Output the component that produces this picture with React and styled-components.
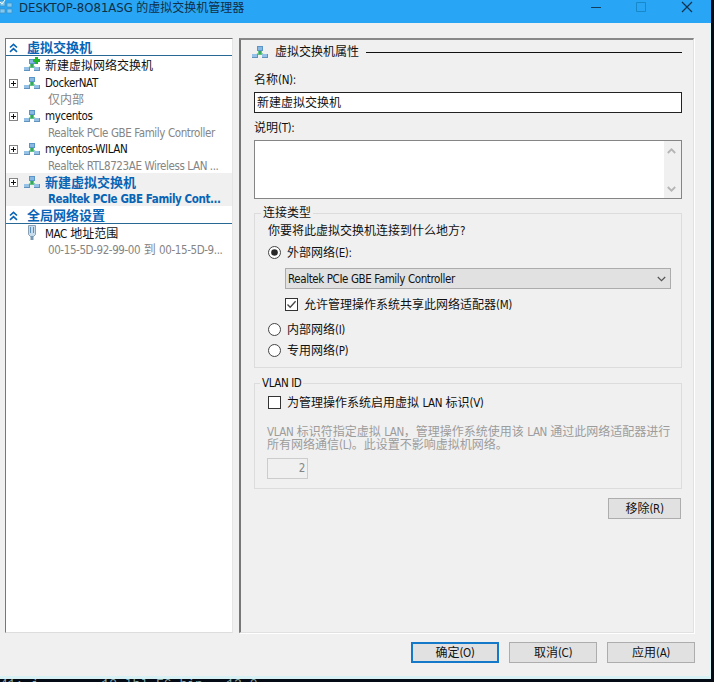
import styled, { createGlobalStyle } from "styled-components";

const adapter = "Realtek PCIe GBE Family Controller";

const switches = [
  { name: "DockerNAT", detail: "仅内部" },
  { name: "mycentos", detail: adapter },
  { name: "mycentos-WILAN", detail: "Realtek RTL8723AE Wireless LAN ..." },
  { name: "新建虚拟交换机", detail: "Realtek PCIe GBE Family Cont...", selected: true },
];

// latin runs are set a little smaller than the chinese text
const Text = ({ children }) =>
  children
    .split(/([\x21-\x7e](?:[\x20-\x7e]*[\x21-\x7e])?)/)
    .map((part, i) => (i % 2 ? <Latin key={i}>{part}</Latin> : part));

const SwitchIcon = ({ add }) => (
  <svg width="18" height="16" viewBox="0 0 18 16">
    <path d="M7 6h4v3l3 2H4l3-2z" fill="#63c581" />
    <path d="M8 6h2v4H8z" fill="#36a95e" />
    <rect x="6" y="2" width="6" height="5" fill="#5b94c6" />
    <rect x="7" y="3" width="4" height="3" fill="#87b9e2" />
    <rect x="1" y="10" width="6" height="4" fill="#5f92bd" />
    <rect x="1" y="10" width="5" height="3" fill="#94c1e5" />
    <rect x="11" y="10" width="6" height="4" fill="#5f92bd" />
    <rect x="11" y="10" width="5" height="3" fill="#94c1e5" />
    {add && <path d="M12 0h3v2h2v3h-2v2h-3V5h-2V2h2z" fill="#20b52b" />}
  </svg>
);

const MacIcon = () => (
  <svg width="18" height="18" viewBox="0 0 18 18">
    <path d="M5.5 1.5h7v9l-2 2h-3l-2-2z" fill="#c6dced" stroke="#8ba0b2" />
    <path d="M7.5 3v6m3-6v6" stroke="#5b90ba" />
    <path d="M7.5 12h3v4h-3z" fill="#7898b2" />
  </svg>
);

const Plus = () => (
  <svg width="9" height="9" viewBox="0 0 9 9" shapeRendering="crispEdges">
    <path d="M.5.5h8v8h-8z" fill="#fff" stroke="#848484" />
    <path d="M2 4.5h5M4.5 2v5" stroke="#111" />
  </svg>
);

const Chevrons = () => (
  <svg width="9" height="10" viewBox="0 0 9 10">
    <path d="M1 4.5l3.5-3.2L8 4.5M1 8.8l3.5-3.2L8 8.8" fill="none" stroke="#0864b5" strokeWidth="1.6" />
  </svg>
);

const Arrow = ({ up, color = "#b5b5b5", weight = 1.8 }) => (
  <svg width="9" height="6" viewBox="0 0 9 6">
    <path d={up ? "M.8 5l3.7-3.7L8.2 5" : "M.8 1l3.7 3.7L8.2 1"} fill="none" stroke={color} strokeWidth={weight} />
  </svg>
);

const Choice = ({ box, checked, children, ...rest }) => (
  <ChoiceRow {...rest}>
    <svg width="13" height="13" viewBox="0 0 13 13">
      {box ? (
        <rect x=".5" y=".5" width="12" height="12" fill="#fff" stroke="#333" />
      ) : (
        <circle cx="6.5" cy="6.5" r="6" fill="#fff" stroke="#444" />
      )}
      {checked && box && <path d="M2.5 6.5l2.7 2.8 5.4-6" fill="none" stroke="#444" strokeWidth="1.3" />}
      {checked && !box && <circle cx="6.5" cy="6.5" r="3.3" fill="#292929" />}
    </svg>
    <span>
      <Text>{children}</Text>
    </span>
  </ChoiceRow>
);

const App = () => (
  <Desktop>
    <GlobalStyle />
    <Window>
      <TitleBar>
        <svg width="14" height="16" viewBox="0 0 14 16">
          <path d="M0 1h5v5H0zM7 3h5v4H7zM0 9h5v4H0zM7 9h5v4H7z" fill="#83c8ef" stroke="#3b91c4" strokeWidth=".7" />
          <path d="M0 2l2 2 3-4" fill="none" stroke="#eefaff" />
        </svg>
        <Title>
          <HostName>DESKTOP-8O81ASG</HostName> 的虚拟交换机管理器
        </Title>
        <svg width="106" height="14" viewBox="0 0 106 14">
          <path d="M1 7.5h10" stroke="#123d5b" />
          <path d="M46.5 2.5h9v9h-9z" fill="none" stroke="#1788c9" />
          <path d="M92 2l10 10m0-10L92 12" stroke="#10324c" strokeWidth="1.2" />
        </svg>
      </TitleBar>
      <Main>
        <Sidebar>
          <SectionTitle>
            <Chevrons />
            <span>虚拟交换机</span>
          </SectionTitle>
          <Item $height={18}>
            <i />
            <SwitchIcon add />
            <ItemName $drop>新建虚拟网络交换机</ItemName>
          </Item>
          {switches.map(({ name, detail, selected }) => (
            <Item key={name} $selected={selected}>
              <Plus />
              <SwitchIcon />
              <ItemName $drop={selected}>
                <Text>{name}</Text>
              </ItemName>
              <Detail>
                <Text>{detail}</Text>
              </Detail>
            </Item>
          ))}
          <SectionTitle $height={18}>
            <Chevrons />
            <span>全局网络设置</span>
          </SectionTitle>
          <Item>
            <i />
            <MacIcon />
            <ItemName $drop>
              <Text>MAC 地址范围</Text>
            </ItemName>
            <Detail>
              <Text>00-15-5D-92-99-00 到 00-15-5D-9...</Text>
            </Detail>
          </Item>
        </Sidebar>
        <Properties>
          <Heading>
            <SwitchIcon />
            <span>虚拟交换机属性</span>
          </Heading>
          <Label>
            <Text>名称(N):</Text>
          </Label>
          <NameField>新建虚拟交换机</NameField>
          <Label $height={27}>
            <Text>说明(T):</Text>
          </Label>
          <Notes>
            <ScrollBar>
              <Arrow up />
              <Arrow />
            </ScrollBar>
          </Notes>
          <Connection>
            <Legend>连接类型</Legend>
            <Question>
              <Text>你要将此虚拟交换机连接到什么地方?</Text>
            </Question>
            <Choice checked>外部网络(E):</Choice>
            <Select>
              <span>
                <Text>{adapter}</Text>
              </span>
              <Arrow color="#555" weight={1.2} />
            </Select>
            <Choice box checked $nested>
              允许管理操作系统共享此网络适配器(M)
            </Choice>
            <Choice>内部网络(I)</Choice>
            <Choice>专用网络(P)</Choice>
          </Connection>
          <Vlan>
            <Legend>
              <Text>VLAN ID</Text>
            </Legend>
            <Choice box>为管理操作系统启用虚拟 LAN 标识(V)</Choice>
            <Hint>
              <Text>VLAN 标识符指定虚拟 LAN，管理操作系统使用该 LAN 通过此网络适配器进行</Text>
              <br />
              <Text>所有网络通信(L)。此设置不影响虚拟机网络。</Text>
            </Hint>
            <VlanInput>
              <Text>2</Text>
            </VlanInput>
          </Vlan>
          <Remove>
            <Text>移除(R)</Text>
          </Remove>
        </Properties>
      </Main>
      <Footer>
        <Button $primary>
          <Text>确定(O)</Text>
        </Button>
        <Button>
          <Text>取消(C)</Text>
        </Button>
        <Button>
          <Text>应用(A)</Text>
        </Button>
      </Footer>
    </Window>
    <Terminal>41: i        10 lbl F6 bin   12 0</Terminal>
  </Desktop>
);

export default App;

const GlobalStyle = createGlobalStyle`
  * {
    box-sizing: border-box;
  }

  body {
    margin: 0;
    overflow: hidden;
  }

  svg {
    display: block;
    flex-shrink: 0;
  }
`;

const Desktop = styled.div`
  width: 714px;
  height: 682px;
  overflow: hidden;
  background: #050b14;
  color: #111;
  font: 12px/16px "DejaVu Sans Condensed", "Noto Sans CJK SC", sans-serif;
  white-space: nowrap;
`;

const Latin = styled.span`
  font-size: 11.5px;
  letter-spacing: -0.4px;
`;

const Window = styled.div`
  width: 711px;
  height: 679px;
  border-right: 2px solid #d8fafc;
  border-bottom: 3px solid #d8f1f4;
  background: #f0f0f0;
`;

const TitleBar = styled.header`
  display: flex;
  align-items: flex-start;
  height: 23px;
  width: 711px;
  padding-right: 15px;
  background: #29a5f5;
`;

const Title = styled.div`
  flex: 1;
  padding-left: 5px;
  color: #102f45;
`;

const HostName = styled.span`
  font-size: 13px;
`;

const Main = styled.main`
  display: flex;
  gap: 6px;
  padding: 15px 0 0 5px;
`;

const Sidebar = styled.aside`
  width: 228px;
  height: 595px;
  border: 1px solid #777;
  border-right-color: #e5e5e5;
  border-bottom-color: #ddd;
  background: #fff;
`;

const SectionTitle = styled.div`
  display: grid;
  grid-template-columns: 18px 1fr;
  align-items: center;
  height: ${({ $height = 17 }) => $height}px;
  padding: 2px 0 0 3px;
  border-bottom: 1px solid #286894;
  color: #0864b5;
  font-size: 13px;
  line-height: 14px;
  font-weight: 700;
`;

const Item = styled.div`
  display: grid;
  grid-template-columns: 14px 21px 1fr;
  grid-template-rows: 18px 15px;
  align-items: center;
  height: ${({ $height = 33 }) => $height}px;
  padding-left: 3px;
  overflow: hidden;
  background: ${({ $selected }) => ($selected ? "#f0f0f0" : "transparent")};
  color: ${({ $selected }) => ($selected ? "#0864b5" : "#111")};
  font-weight: ${({ $selected }) => ($selected ? 700 : 400)};
  font-size: ${({ $selected }) => ($selected ? 13 : 12)}px;

  > span:last-child {
    color: ${({ $selected }) => $selected && "#0864b5"};
  }
`;

const ItemName = styled.span`
  padding: ${({ $drop }) => ($drop ? 2 : 0)}px 0 0 1px;
`;

const Detail = styled.span`
  grid-column: 3;
  padding-left: 4px;
  color: #858585;
`;

const Properties = styled.section`
  width: 455px;
  height: 595px;
  padding: 3px 11px 0 13px;
  border: 1px solid #e1e1e1;
  border-top: 2px solid #888;
  border-left: 2px solid #777;
  box-shadow: 1px 1px #fff;
`;

const Heading = styled.div`
  display: flex;
  align-items: center;
  gap: 6px;
  height: 18px;
  margin: 0 0 2px -3px;

  &::after {
    flex: 1;
    margin-left: 1px;
    border-top: 1px solid #111;
    content: "";
  }
`;

const Label = styled.div`
  height: ${({ $height = 29 }) => $height}px;
  padding-top: ${({ $height = 29 }) => $height - 20}px;
`;

const NameField = styled.div`
  height: 21px;
  padding: 2px;
  border: 1px solid #222;
  background: #fff;
`;

const Notes = styled.div`
  display: flex;
  justify-content: flex-end;
  height: 59px;
  border: 1px solid #858585;
  background: #fff;
`;

const ScrollBar = styled.div`
  display: flex;
  flex-direction: column;
  align-items: center;
  justify-content: space-between;
  width: 17px;
  padding: 7px 2px 6px 0;
  background: #f0f0f0;
`;

const Group = styled.div`
  border: 1px solid #dcdcdc;
`;

const Connection = styled(Group)`
  height: 155px;
  margin-top: 14px;
  padding: 0 10px 0 13px;
`;

const Vlan = styled(Group)`
  height: 106px;
  margin-top: 15px;
  padding: 0 12px;

  > div:nth-child(2) {
    margin: 1px 0 0 1px;
  }
`;

const Legend = styled.div`
  width: fit-content;
  height: 16px;
  margin: -9px 0 0 -7px;
  padding: 0 2px;
  background: #f0f0f0;
`;

const Question = styled.div`
  height: 21px;
  padding-top: 2px;
`;

const ChoiceRow = styled.div`
  display: flex;
  align-items: center;
  gap: 6px;
  height: 21px;
  margin: ${({ $nested }) => ($nested ? "5px 0 4px 17px" : "0")};
`;

const Select = styled.div`
  display: flex;
  align-items: center;
  justify-content: space-between;
  height: 21px;
  margin: 5px 0 0 17px;
  padding: 0 4px 0 2px;
  border: 1px solid #acacac;
  background: #e1e1e1;
`;

const Hint = styled.div`
  height: 45px;
  padding-top: 13px;
  color: #9c9c9c;
  line-height: 13px;
`;

const VlanInput = styled.div`
  width: 41px;
  height: 21px;
  padding: 1px 2px 0;
  border: 1px solid #ccc;
  color: #858585;
  text-align: right;
`;

const Button = styled.button`
  width: 88px;
  height: 21px;
  padding: 2px 0 0;
  border: ${({ $primary }) => ($primary ? "2px solid #1479c9" : "1px solid #adadad")};
  background: #e1e1e1;
  color: #111;
  font: inherit;
  line-height: 15px;
`;

const Remove = styled(Button)`
  display: block;
  width: 73px;
  margin: 9px 1px 0 auto;
`;

const Footer = styled.footer`
  display: flex;
  justify-content: flex-end;
  gap: 10px;
  padding: 9px 14px 0 0;
`;

const Terminal = styled.div`
  height: 3px;
  overflow: hidden;
  color: #83a7a9;
  font: 13px/11px "Liberation Mono", monospace;
  white-space: pre;
`;
